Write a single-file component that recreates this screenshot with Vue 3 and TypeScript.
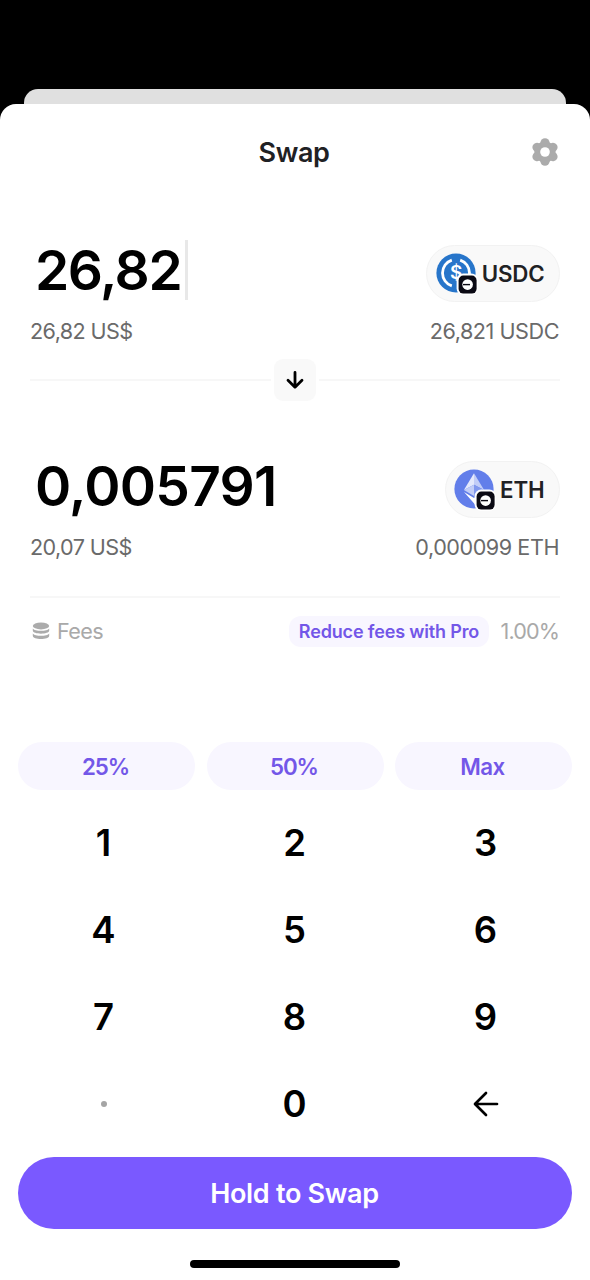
<script setup lang="ts">
interface Side {
  amount: string
  fiat: string
  balance: string
  symbol: 'USDC' | 'ETH'
  active: boolean
}

const sides: Side[] = [
  { amount: '26,82', fiat: '26,82 US$', balance: '26,821 USDC', symbol: 'USDC', active: true },
  { amount: '0,005791', fiat: '20,07 US$', balance: '0,000099 ETH', symbol: 'ETH', active: false },
]
const presets: string[] = ['25%', '50%', 'Max']
const digits: string[] = ['1', '2', '3', '4', '5', '6', '7', '8', '9']
const lobes: number[] = [0, 60, 120, 180, 240, 300]
</script>

<template>
  <div class="screen">
    <div class="back-sheet"></div>
    <main class="sheet">
      <header class="header">
        <h1 class="title">Swap</h1>
        <svg class="gear" viewBox="-14 -14 28 28">
          <circle r="10.6" />
          <circle v-for="a in lobes" :key="a" cy="-9.2" r="4.6" :transform="`rotate(${a})`" />
          <circle class="hole" r="4.8" />
        </svg>
      </header>

      <template v-for="side in sides" :key="side.symbol">
        <section class="side">
          <div class="amount-row">
            <div class="amount">
              <span :class="['value', { long: !side.active }]">{{ side.amount }}</span>
              <span v-if="side.active" class="caret"></span>
            </div>
            <button class="token">
              <svg class="coin" viewBox="0 0 42 42">
                <template v-if="side.symbol === 'USDC'">
                  <circle cx="20" cy="20" r="19.6" fill="#2775ca" />
                  <g fill="none" stroke="#fff" stroke-width="2.8">
                    <path d="M15.8 7.1a13.6 13.6 0 0 0 0 25.8" />
                    <path d="M24.2 7.1a13.6 13.6 0 0 1 0 25.8" />
                  </g>
                  <text class="dollar" x="20" y="26.4">$</text>
                </template>
                <template v-else>
                  <circle cx="20" cy="20" r="19.6" fill="#627eea" />
                  <path d="M20 4.2 9.9 21 20 15.8z" fill="#e4e9fc" />
                  <path d="M20 4.2 30.1 21 20 15.8z" fill="#c2cdf7" />
                  <path d="M9.9 21 20 15.8V27z" fill="#c2cdf7" />
                  <path d="M30.1 21 20 15.8V27z" fill="#8198ee" />
                  <path d="M10 23 20 29l5-3v14z" fill="#fff" />
                </template>
                <rect x="20.6" y="20.6" width="21.4" height="21.4" rx="6.6" fill="#fff" />
                <rect x="22.6" y="22.6" width="18" height="18" rx="4.8" fill="#0b0a14" />
                <circle cx="31.6" cy="31.6" r="5.3" fill="#fff" />
                <rect x="27" y="30.9" width="7" height="1.4" fill="#0b0a14" />
              </svg>
              <span>{{ side.symbol }}</span>
            </button>
          </div>
          <div class="sub-row">
            <span>{{ side.fiat }}</span>
            <span class="balance">{{ side.balance }}</span>
          </div>
        </section>
        <div v-if="side.active" class="switcher">
          <i></i>
          <button class="flip">
            <svg viewBox="0 0 20 20">
              <path d="M10 2.4v14.8M3 10.2l7 7 7-7" />
            </svg>
          </button>
          <i></i>
        </div>
      </template>

      <section class="fees">
        <svg class="stack" viewBox="0 0 18 18">
          <ellipse cx="9" cy="3.9" rx="8.2" ry="3.5" />
          <path d="M.8 6.4C2.6 9.6 15.4 9.6 17.2 6.4v2.2c0 4.2-16.4 4.2-16.4 0z" />
          <path d="M.8 11.4c1.8 3.2 14.6 3.2 16.4 0v2.4c0 4.4-16.4 4.4-16.4 0z" />
        </svg>
        <span class="fees-label">Fees</span>
        <span class="pro">Reduce fees with Pro</span>
        <span class="rate">1.00%</span>
      </section>

      <div class="presets">
        <button v-for="p in presets" :key="p" class="preset">{{ p }}</button>
      </div>

      <div class="keypad">
        <button v-for="d in digits" :key="d" class="key">{{ d }}</button>
        <button class="key"><span class="dot"></span></button>
        <button class="key">0</button>
        <button class="key">
          <svg class="erase" viewBox="0 0 26 26">
            <path d="M24 13H2.2M13 2 2 13l11 11" />
          </svg>
        </button>
      </div>

      <button class="hold">Hold to Swap</button>
      <div class="home"></div>
    </main>
  </div>
</template>

<style>
body {
  margin: 0;
  background: #000;
}
</style>

<style scoped>
.screen {
  box-sizing: border-box;
  width: 590px;
  height: 1280px;
  padding-top: 89px;
  overflow: hidden;
  background: #000;
  font-family: Inter, 'Liberation Sans', sans-serif;
}
button {
  margin: 0;
  padding: 0;
  border: 0;
  background: none;
  font: inherit;
  color: inherit;
}
svg {
  display: block;
  flex: none;
}
.back-sheet {
  height: 15px;
  margin: 0 24px;
  border-radius: 14px 14px 0 0;
  background: #e0e0e0;
}
.sheet {
  display: flex;
  flex-direction: column;
  height: 1176px;
  border-radius: 16px 16px 0 0;
  background: #fff;
}
.header {
  display: grid;
  grid-template-columns: 28px 1fr 28px;
  align-items: center;
  height: 96px;
  padding: 0 31px;
}
.title {
  grid-column: 2;
  margin: 0;
  padding-right: 2px;
  text-align: center;
  font-size: 27px;
  font-weight: 600;
  letter-spacing: -0.4px;
  color: #1f2124;
}
.gear {
  width: 28px;
  height: 28px;
  fill: #ababab;
}
.gear .hole {
  fill: #fff;
}
.side {
  padding: 39px 30px 0;
}
.side + .switcher + .side {
  padding-top: 54px;
}
.amount-row {
  display: flex;
  justify-content: space-between;
  height: 64px;
}
.amount {
  display: flex;
  align-items: center;
  height: 61px;
  padding-left: 5px;
}
.value {
  font-size: 55px;
  font-weight: 600;
  line-height: 60px;
  letter-spacing: -1.4px;
  color: #000;
}
.value.long {
  letter-spacing: -0.75px;
}
.caret {
  width: 3px;
  height: 60px;
  margin-left: 4px;
  background: #e8e8e8;
}
.token {
  box-sizing: border-box;
  display: flex;
  align-items: center;
  gap: 4px;
  height: 57px;
  margin-top: 6px;
  padding: 0 14.5px 0 8.5px;
  border: 1.5px solid #f2f2f2;
  border-radius: 29px;
  background: #f9f9f9;
  font-size: 22.3px;
  font-weight: 600;
  letter-spacing: -0.15px;
  color: #1f2124;
}
.coin {
  width: 42px;
  height: 42px;
  margin-top: 1px;
}
.dollar {
  font-size: 19px;
  font-weight: 600;
  text-anchor: middle;
  fill: #fff;
}
.sub-row {
  display: flex;
  justify-content: space-between;
  margin-top: 14px;
  font-size: 21.6px;
  line-height: 28px;
  letter-spacing: -0.6px;
  color: #6a6a6a;
}
.balance {
  margin-right: 1px;
  letter-spacing: -0.45px;
}
.switcher {
  display: flex;
  align-items: center;
  gap: 3px;
  height: 42px;
  margin-top: 14px;
  padding: 0 30px;
}
.switcher i {
  flex: 1;
  height: 2px;
  background: #f7f7f7;
}
.flip {
  display: grid;
  place-items: center;
  width: 42px;
  height: 42px;
  border-radius: 9px;
  background: #f9f9f9;
}
.flip svg {
  width: 20px;
  height: 20px;
  fill: none;
  stroke: #000;
  stroke-width: 2.8;
  stroke-linecap: round;
  stroke-linejoin: round;
}
.fees {
  display: flex;
  align-items: center;
  height: 66px;
  margin: 35px 30px 0;
  border-top: 2px solid #f7f7f7;
  font-size: 21.6px;
  color: #a9a9a9;
}
.stack {
  width: 18px;
  height: 18px;
  margin: 0 7px 0 2px;
  fill: #ababab;
}
.fees-label {
  letter-spacing: -0.6px;
}
.pro {
  height: 31px;
  margin-left: auto;
  padding: 0 10px;
  border-radius: 12px;
  background: #f8f6ff;
  font-size: 18px;
  font-weight: 600;
  line-height: 31px;
  letter-spacing: -0.16px;
  color: #7357e8;
}
.rate {
  margin: 0 1px 0 11.5px;
  letter-spacing: -0.9px;
}
.presets {
  display: grid;
  grid-template-columns: repeat(3, 1fr);
  gap: 11.5px;
  margin: 78px 18px 0;
}
.preset {
  height: 48px;
  padding: 1px 2px 0 0;
  border-radius: 24px;
  background: #f8f6ff;
  font-size: 22.3px;
  font-weight: 600;
  letter-spacing: -1.1px;
  color: #7357e8;
}
.preset:last-child {
  letter-spacing: -0.5px;
}
.keypad {
  display: grid;
  grid-template-columns: repeat(3, 191px);
  grid-auto-rows: 87px;
  margin: 9px 0 0 8px;
}
.key {
  display: grid;
  place-items: center;
  padding-top: 1px;
  font-size: 36.5px;
  font-weight: 600;
  color: #000;
}
.dot {
  width: 6px;
  height: 6px;
  border-radius: 50%;
  background: #a5a5a5;
}
.erase {
  width: 26px;
  height: 26px;
  fill: none;
  stroke: #000;
  stroke-width: 2.7;
  stroke-linecap: round;
  stroke-linejoin: round;
}
.hold {
  flex: none;
  height: 72px;
  margin: 10px 18px 0;
  padding-right: 1px;
  border-radius: 36px;
  background: #7a59ff;
  font-size: 27px;
  font-weight: 600;
  letter-spacing: -0.3px;
  color: #fff;
}
.home {
  flex: none;
  width: 210px;
  height: 8px;
  margin: 31px auto 0;
  border-radius: 4px;
  background: #000;
}
</style>
